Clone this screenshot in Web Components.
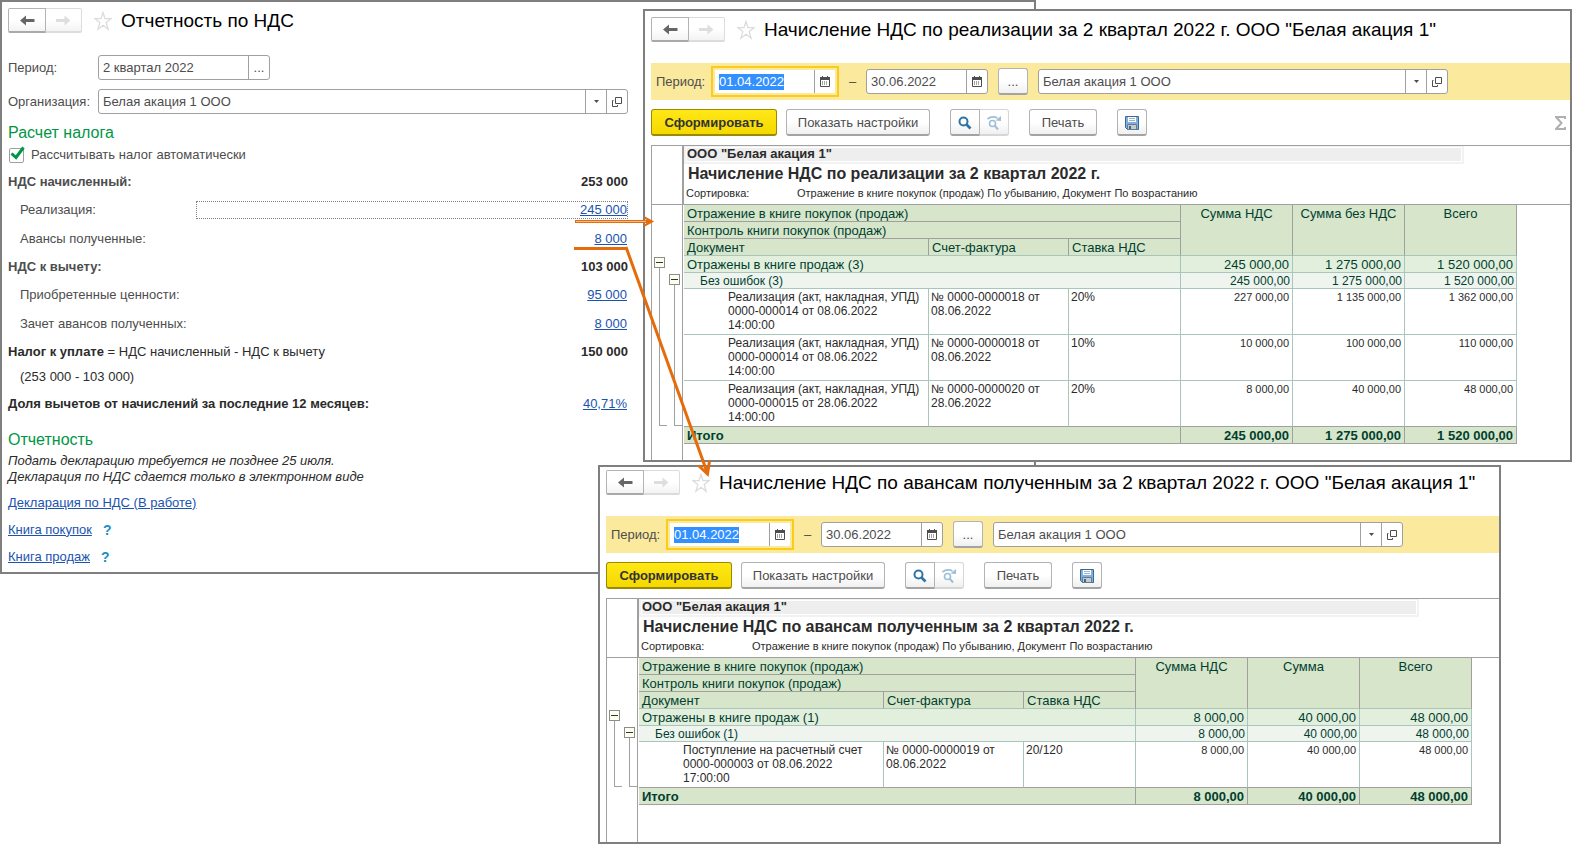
<!DOCTYPE html>
<html lang="ru">
  <head>
    <meta charset="UTF-8" />
    <meta name="viewport" content="width=device-width, initial-scale=1.0" />
    <title>Отчетность по НДС</title>
    <style>
      body {
        margin: 0;
        background: #fff;
        color: #4d4d4d;
        font: 13px/16px "Liberation Sans", Arial, sans-serif;
      }
    </style>
  </head>
  <body>
    <desk-top>
      <app-window style="left: 0; top: 0; right: 538px">
        <page-head caption="Отчетность по НДС"></page-head>
        <vat-summary></vat-summary>
      </app-window>

      <app-window style="left: 643px; top: 9px; right: 2px">
        <page-head caption='Начисление НДС по реализации за 2 квартал 2022 г. ООО "Белая акация 1"'></page-head>
        <period-bar></period-bar>
        <report-tools total></report-tools>
        <vat-report source="sales"></vat-report>
      </app-window>

      <app-window compact style="left: 598px; top: 465px; right: 73px">
        <page-head caption='Начисление НДС по авансам полученным за 2 квартал 2022 г. ООО "Белая акация 1"'></page-head>
        <period-bar></period-bar>
        <report-tools></report-tools>
        <vat-report source="advances" style="--tail: 37px"></vat-report>
      </app-window>

      <link-arrows></link-arrows>
    </desk-top>

    <template id="desk-top">
      <style>
        :host {
          display: block;
          position: relative;
          min-height: 100vh;
          overflow: hidden;
        }
      </style>
      <slot></slot>
    </template>

    <template id="app-window">
      <style>
        :host {
          display: block;
          position: absolute;
          box-sizing: border-box;
          border: 2px solid #7f7f7f;
          background: #fff;
          padding: 6px 0 0 6px;
        }
        :host([compact]) {
          padding-top: 3px;
        }
      </style>
      <slot></slot>
    </template>

    <template id="page-head">
      <style>
        :host {
          display: flex;
          align-items: center;
          height: 25px;
          padding-bottom: 21px;
        }
        .nav {
          display: flex;
        }
        button {
          box-sizing: border-box;
          width: 38px;
          height: 25px;
          padding: 0;
          border: 1px solid #b3b3b3;
          border-bottom: 2px solid #a9a9a9;
          border-radius: 2px 0 0 2px;
          background: linear-gradient(#fff 50%, #f3f3f3);
        }
        button[disabled] {
          width: 36px;
          border-color: #dcdcdc;
          border-left: 0;
          border-radius: 0 2px 2px 0;
        }
        svg {
          display: block;
          margin: 0 auto;
        }
        .star {
          flex: none;
          margin: 0 9px 0 12px;
        }
        h1 {
          margin: 0;
          font-size: 19px;
          line-height: 24px;
          font-weight: 400;
          color: #000;
          white-space: nowrap;
        }
      </style>
      <div class="nav">
        <button aria-label="Назад">
          <svg width="15" height="11"><path d="M0 5.500L6 .5V4h8.500v3H6v3.500z" fill="#666" /></svg>
        </button>
        <button aria-label="Вперед" disabled>
          <svg width="15" height="11"><path d="M14.500 5.500L8.500 .5V4H0v3h8.500v3.500z" fill="#dedede" /></svg>
        </button>
      </div>
      <svg class="star" width="18" height="20" viewBox="0 0 18 20">
        <path d="M9 1.500l2 6.200h6l-4.800 3.900 1.900 6.600L9 14.300l-5.100 3.900 1.900-6.600L1 7.700h6z" fill="none" stroke="#dcdcdc" stroke-width="1.300" />
      </svg>
      <h1></h1>
    </template>

    <template id="text-field">
      <style>
        :host {
          display: flex;
          align-items: center;
          min-width: 0;
        }
        label {
          flex: none;
          width: var(--label-width, auto);
          white-space: nowrap;
        }
        .box {
          display: flex;
          flex: 1;
          min-width: 0;
          box-sizing: border-box;
          height: 25px;
          border: 1px solid #a0a0a0;
          border-radius: 3px;
          background: #fff;
        }
        .edit {
          flex: 1;
          min-width: 0;
          display: flex;
          align-items: center;
          padding: 0 4px;
        }
        input {
          width: 100%;
          padding: 0;
          border: 0;
          outline: 0;
          background: none;
          font: inherit;
          color: #4d4d4d;
        }
        button {
          flex: none;
          width: 21px;
          padding: 0;
          border: 0;
          border-left: 1px solid #a0a0a0;
          background: none;
          font: inherit;
          color: #4d4d4d;
        }
        svg {
          display: block;
          margin: 0 auto;
        }
        :host([active]) .box {
          height: 31px;
          padding: 2px;
          border: 2px solid #fbcc1c;
          border-radius: 0;
          background: #fff content-box;
        }
        :host([active]) input {
          field-sizing: content;
          width: auto;
          background: #3390ff;
          color: #fff;
        }
      </style>
      <label for="value"></label>
      <div class="box">
        <div class="edit"><input id="value" type="text" /></div>
      </div>
    </template>

    <template id="vat-summary">
      <style>
        :host {
          display: block;
          max-width: 620px;
          padding: 1px 0 2px;
        }
        text-field {
          --label-width: 90px;
          margin-bottom: 9px;
        }
        .period {
          width: 262px;
        }
        h2 {
          margin: 0;
          font-size: 16px;
          line-height: 19px;
          font-weight: 400;
          color: #009646;
        }
        .auto {
          display: flex;
          align-items: center;
          gap: 7px;
          height: 26px;
        }
        .auto input {
          appearance: none;
          width: 15px;
          height: 15px;
          margin: 0 0 0 1px;
          border: 1px solid #a0a0a0;
          border-radius: 2px;
        }
        .tick {
          width: 16px;
          height: 18px;
          margin: -4px -1px 0 -22px;
          pointer-events: none;
        }
        .row {
          display: flex;
          align-items: center;
          justify-content: space-between;
          height: 29px;
          padding-left: 12px;
        }
        .row.head {
          height: 27px;
          padding-left: 0;
          font-weight: 700;
        }
        .row.dark {
          color: #2b2b2b;
        }
        .row span {
          font-weight: 400;
        }
        .row b {
          color: #2b2b2b;
        }
        .focus {
          box-sizing: border-box;
          width: 432px;
          height: 18px;
          border: 1px dotted #808080;
          text-align: right;
        }
        .formula {
          height: 23px;
        }
        .row.share {
          height: 31px;
        }
        a {
          color: #1a54b0;
        }
        .row > a {
          margin-right: 1px;
        }
        p {
          margin: 4px 0;
          font-style: italic;
          color: #2b2b2b;
        }
        .reports {
          margin: 11px 0 0;
        }
        .line {
          display: flex;
          align-items: center;
          gap: 11px;
          height: 27px;
        }
        .line b {
          color: #1f8dc4;
          font-size: 14px;
          font-weight: 700;
        }
      </style>
      <text-field class="period" label="Период:" value="2 квартал 2022" buttons="dots"></text-field>
      <text-field label="Организация:" value="Белая акация 1 ООО" buttons="drop open"></text-field>
      <h2>Расчет налога</h2>
      <div class="auto">
        <input id="auto" type="checkbox" checked />
        <svg class="tick" viewBox="0 0 16 18"><path d="M2.500 9.500L7 13.500 14.500 3.500" fill="none" stroke="#009646" stroke-width="3" /></svg>
        <label for="auto">Рассчитывать налог автоматически</label>
      </div>
      <div class="row head">НДС начисленный: <b>253 000</b></div>
      <div class="row">Реализация: <div class="focus"><a href="#">245 000</a></div></div>
      <div class="row">Авансы полученные: <a href="#">8 000</a></div>
      <div class="row head">НДС к вычету: <b>103 000</b></div>
      <div class="row">Приобретенные ценности: <a href="#">95 000</a></div>
      <div class="row">Зачет авансов полученных: <a href="#">8 000</a></div>
      <div class="row head dark"><div>Налог к уплате <span>= НДС начисленный - НДС к вычету</span></div><b>150 000</b></div>
      <div class="row dark formula">(253 000 - 103 000)</div>
      <div class="row head dark share">Доля вычетов от начислений за последние 12 месяцев: <a href="#"><span>40,71%</span></a></div>
      <h2 class="reports">Отчетность</h2>
      <p>Подать декларацию требуется не позднее 25 июля.<br />Декларация по НДС сдается только в электронном виде</p>
      <div class="line"><a href="#">Декларация по НДС (В работе)</a></div>
      <div class="line"><a href="#">Книга покупок</a> <b>?</b></div>
      <div class="line"><a href="#">Книга продаж</a> <b>?</b></div>
    </template>

    <template id="period-bar">
      <style>
        :host {
          display: flex;
          align-items: center;
          height: 37px;
          padding-left: 5px;
          background: #fbe99d;
        }
        .from {
          width: 183px;
          --label-width: 55px;
        }
        .dash {
          width: 27px;
          text-align: center;
        }
        .to {
          width: 122px;
        }
        tool-button {
          margin: 0 10px;
        }
        .org {
          flex: 0 1 410px;
        }
      </style>
      <text-field class="from" active label="Период:" value="01.04.2022" buttons="calendar"></text-field>
      <span class="dash">–</span>
      <text-field class="to" value="30.06.2022" hint="Конец периода" buttons="calendar"></text-field>
      <tool-button style="--width: 30px">...</tool-button>
      <text-field class="org" value="Белая акация 1 ООО" hint="Организация" buttons="drop open"></text-field>
    </template>

    <template id="tool-button">
      <style>
        :host {
          display: block;
          flex: none;
        }
        button {
          display: flex;
          align-items: center;
          justify-content: center;
          box-sizing: border-box;
          width: var(--width);
          height: 27px;
          padding: 1px 0 0;
          border: 1px solid #b3b3b3;
          border-bottom: 2px solid #a3a3a3;
          border-radius: 3px;
          background: linear-gradient(#fff 50%, #f0f0f0);
          font: inherit;
          color: #4d4d4d;
          white-space: nowrap;
        }
        :host([primary]) button {
          border-color: #9b8a00;
          background: linear-gradient(#ffe817, #f5d800);
          font-weight: 700;
          color: #333;
        }
        :host([first]) button {
          border-radius: 3px 0 0 3px;
        }
        :host([last]) button {
          border-color: #d6d6d6;
          border-left: 0;
          border-radius: 0 3px 3px 0;
        }
      </style>
      <button><slot></slot></button>
    </template>

    <template id="report-tools">
      <style>
        :host {
          display: flex;
          align-items: center;
          height: 27px;
          padding: 9px 4px 9px 0;
        }
        .settings {
          margin: 0 20px 0 9px;
        }
        .print {
          margin: 0 20px;
        }
        .sigma {
          display: none;
          margin-left: auto;
        }
        :host([total]) .sigma {
          display: block;
        }
      </style>
      <tool-button primary style="--width: 126px">Сформировать</tool-button>
      <tool-button class="settings" style="--width: 144px">Показать настройки</tool-button>
      <tool-button first style="--width: 30px">
        <svg width="14" height="14"><circle cx="5.500" cy="5.500" r="4" fill="none" stroke="#2f74a8" stroke-width="2" /><path d="M8.500 8.500l4 4" stroke="#2f74a8" stroke-width="2.600" /></svg>
      </tool-button>
      <tool-button last style="--width: 29px">
        <svg width="16" height="16"><g fill="none" stroke="#9dbfd6"><circle cx="6.500" cy="8.500" r="3" stroke-width="1.600" /><path d="M9 11l3 3.500" stroke-width="2" /><path d="M1.500 4Q6 .5 11.500 3" stroke-width="1.800" /></g><path d="M9.500 5.500l5.500.5V1z" fill="#9dbfd6" /></svg>
      </tool-button>
      <tool-button class="print" style="--width: 68px">Печать</tool-button>
      <tool-button style="--width: 30px">
        <svg width="14" height="14"><path d="M.5.5h13v13H2.500l-2-2z" fill="#80afe0" stroke="#40658f" /><path d="M3 1h8v5H3z" fill="#fff" /><path d="M4 2.500h6M4 4.500h6" stroke="#9bb4d2" /><path d="M2.500 13.500v-5h9v5z" fill="#c7cac5" stroke="#5e7d9c" /><path d="M4 10h2v3H4z" fill="#40658f" /></svg>
      </tool-button>
      <svg class="sigma" width="11" height="14"><path d="M10 3V1H1l5.500 6L1 13h9v-2" fill="none" stroke="#b0b0b0" stroke-width="2" /></svg>
    </template>

    <template id="vat-report">
      <style>
        :host {
          display: grid;
          grid-template-columns: 33px minmax(0, 1fr);
          border-top: 1px solid #a0a0a0;
          color: #2b2b2b;
        }
        .corner {
          border-left: 1px solid #a0a0a0;
          border-right: 2px solid #a0a0a0;
        }
        .corner,
        .top {
          height: 58px;
          border-bottom: 1px solid #a0a0a0;
        }
        .org {
          box-sizing: border-box;
          max-width: 780px;
          height: 18px;
          padding: 2px 3px;
          background: #f2f2f2;
        }
        .org b {
          display: block;
          box-sizing: border-box;
          height: 13px;
          background: #eee;
          outline: 1px solid #fff;
          line-height: 11px;
        }
        h3 {
          margin: 0;
          padding-left: 4px;
          font-size: 16px;
          line-height: 20px;
        }
        .sort {
          display: flex;
          padding-left: 2px;
          font-size: 11px;
          line-height: 18px;
        }
        .sort span {
          width: 111px;
        }
        .tree {
          display: flex;
          gap: 2px;
          box-sizing: border-box;
          width: 32px;
          padding: 52px 0 calc(var(--tail, 16px) + 18px) 2px;
          border: solid #a0a0a0;
          border-width: 0 1px;
        }
        .branch {
          display: flex;
          flex-direction: column;
          width: 13px;
        }
        .branch + .branch {
          padding-top: 17px;
        }
        .branch button {
          width: 11px;
          height: 11px;
          padding: 0;
          border: 1px solid #8c8c8c;
          background: #fffff0 linear-gradient(#333, #333) center / 7px 1px no-repeat;
        }
        .branch i {
          flex: 1;
          margin-left: 5px;
          border: solid #a0a0a0;
          border-width: 0 0 1px 1px;
        }
        .sheet {
          padding-bottom: var(--tail, 16px);
        }
        table {
          table-layout: fixed;
          width: 833px;
          border-collapse: separate;
          border-spacing: 0;
        }
        th,
        td {
          box-sizing: border-box;
          height: 17px;
          padding: 1px 3px 0;
          border: solid #a8c6bb;
          border-width: 0 1px 1px 0;
          line-height: 15px;
          font-weight: 400;
          text-align: left;
          vertical-align: top;
          white-space: nowrap;
        }
        th,
        .total td {
          border-color: #a0a0a0;
          background: #d7e5cb;
          color: #003f2f;
        }
        th.sum {
          text-align: center;
        }
        thead tr:last-child th,
        th.sum {
          border-bottom-color: #a8c6bb;
        }
        td.num {
          text-align: right;
        }
        .group td {
          background: #e3efdd;
          color: #003f2f;
        }
        .sub td {
          height: 16px;
          padding-right: 2px;
          background: #eff4ef;
          font-size: 12px;
          line-height: 14px;
          color: #003f2f;
        }
        .sub td:first-child {
          padding-left: 16px;
        }
        .item td {
          height: 46px;
          padding: 1px 3px 0 2px;
          font-size: 12px;
          line-height: 14px;
          white-space: pre-line;
        }
        .item td:first-child {
          padding-left: 44px;
          padding-right: 0;
        }
        .item .num {
          font-size: 11px;
        }
        .item.final td {
          border-bottom-color: #a0a0a0;
        }
        .total td {
          font-weight: 700;
        }
      </style>
      <div class="corner"></div>
      <div class="top">
        <div class="org"><b>ООО "Белая акация 1"</b></div>
        <h3></h3>
        <div class="sort"><span>Сортировка:</span>Отражение в книге покупок (продаж) По убыванию, Документ По возрастанию</div>
      </div>
      <div class="tree">
        <div class="branch"><button aria-label="Свернуть"></button><i></i></div>
        <div class="branch"><button aria-label="Свернуть"></button><i></i></div>
      </div>
      <div class="sheet">
        <table>
          <colgroup>
            <col style="width: 245px" />
            <col style="width: 140px" />
            <col span="4" style="width: 112px" />
          </colgroup>
          <thead></thead>
          <tbody></tbody>
        </table>
      </div>
    </template>

    <template id="link-arrows">
      <style>
        :host {
          position: absolute;
          left: 0;
          top: 0;
          pointer-events: none;
        }
        svg {
          display: block;
        }
      </style>
      <svg width="720" height="480" fill="none" stroke="#e46c0a">
        <path d="M575 221.500h76" stroke-width="3" />
        <path d="M576 221.500h70" stroke="#f6b98a" />
        <path d="M644.500 217.500l7.500 4-7.500 4" stroke-width="2" />
        <path d="M574 248.500h52" stroke-width="3" />
        <path d="M626 247L707 472" stroke-width="3" />
        <path d="M698.500 465.500l9 8.500 2-13" stroke-width="3" />
      </svg>
    </template>

    <script>
      const reports = {
        sales: {
          title: 'Начисление НДС по реализации за 2 квартал 2022 г.',
          sums: ['Сумма НДС', 'Сумма без НДС', 'Всего'],
          totals: ['245 000,00', '1 275 000,00', '1 520 000,00'],
          items: [
            ['Реализация (акт, накладная, УПД)\n0000-000014 от 08.06.2022\n14:00:00', '№ 0000-0000018 от\n08.06.2022', '20%', '227 000,00', '1 135 000,00', '1 362 000,00'],
            ['Реализация (акт, накладная, УПД)\n0000-000014 от 08.06.2022\n14:00:00', '№ 0000-0000018 от\n08.06.2022', '10%', '10 000,00', '100 000,00', '110 000,00'],
            ['Реализация (акт, накладная, УПД)\n0000-000015 от 28.06.2022\n14:00:00', '№ 0000-0000020 от\n28.06.2022', '20%', '8 000,00', '40 000,00', '48 000,00']
          ]
        },
        advances: {
          title: 'Начисление НДС по авансам полученным за 2 квартал 2022 г.',
          sums: ['Сумма НДС', 'Сумма', 'Всего'],
          totals: ['8 000,00', '40 000,00', '48 000,00'],
          items: [
            ['Поступление на расчетный счет\n0000-000003 от 08.06.2022\n17:00:00', '№ 0000-0000019 от\n08.06.2022', '20/120', '8 000,00', '40 000,00', '48 000,00']
          ]
        }
      }

      // кнопки внутри поля ввода
      const fieldButtons = {
        dots: '<button aria-label="Выбрать">...</button>',
        drop: '<button aria-label="Список"><svg width="5" height="3"><path d="M0 0h5L2.500 3z" fill="#4d4d4d" /></svg></button>',
        open: '<button aria-label="Открыть"><svg width="10" height="10" fill="none" stroke="#4d4d4d"><path d="M3.500.5h6v6h-6zM1.500 3.500h-1v6h5v-1.500" /></svg></button>',
        calendar: '<button aria-label="Календарь"><svg width="10" height="11"><path d="M.5 1.500h9v9h-9z" fill="#fff" stroke="#4d4d4d" /><path d="M0 1h10v3H0zM2 0h1v2H2zM7 0h1v2H7z" fill="#4d4d4d" /><path d="M2 6h6M2 8h6" stroke="#4d4d4d" stroke-dasharray="1 1" /></svg></button>'
      }

      class BaseElement extends HTMLElement {
        constructor() {
          super()
          this.attachShadow({ mode: 'open' })
          const template = document.getElementById(this.localName)
          this.shadowRoot.append(document.importNode(template.content, true))
        }
        $(selector) {
          return this.shadowRoot.querySelector(selector)
        }
      }

      class PageHead extends BaseElement {
        connectedCallback() {
          this.$('h1').textContent = this.getAttribute('caption')
        }
      }

      class TextField extends BaseElement {
        connectedCallback() {
          const label = this.getAttribute('label')
          if (label) {
            this.$('label').textContent = label
          } else {
            this.$('label').remove()
            this.$('input').setAttribute('aria-label', this.getAttribute('hint'))
          }
          this.$('input').value = this.getAttribute('value')
          const names = this.getAttribute('buttons').split(' ')
          this.$('.box').insertAdjacentHTML('beforeend', names.map((name) => fieldButtons[name]).join(''))
        }
      }

      class VatReport extends BaseElement {
        connectedCallback() {
          const { title, sums, totals, items } = reports[this.getAttribute('source')]
          const nums = (list) => list.map((n) => `<td class="num">${n}</td>`).join('')
          this.$('h3').textContent = title
          this.$('thead').innerHTML = `
            <tr>
              <th colspan="3">Отражение в книге покупок (продаж)</th>
              ${sums.map((s) => `<th class="sum" rowspan="3">${s}</th>`).join('')}
            </tr>
            <tr><th colspan="3">Контроль книги покупок (продаж)</th></tr>
            <tr><th>Документ</th><th>Счет-фактура</th><th>Ставка НДС</th></tr>`
          const rows = items.map((item, i) => {
            const text = item.slice(0, 3).map((t) => `<td>${t}</td>`).join('')
            const cls = i === items.length - 1 ? 'item final' : 'item'
            return `<tr class="${cls}">${text}${nums(item.slice(3))}</tr>`
          })
          this.$('tbody').innerHTML = `
            <tr class="group"><td colspan="3">Отражены в книге продаж (${items.length})</td>${nums(totals)}</tr>
            <tr class="sub"><td colspan="3">Без ошибок (${items.length})</td>${nums(totals)}</tr>
            ${rows.join('')}
            <tr class="total"><td colspan="3">Итого</td>${nums(totals)}</tr>`
        }
      }

      customElements.define('desk-top', class extends BaseElement {})
      customElements.define('app-window', class extends BaseElement {})
      customElements.define('page-head', PageHead)
      customElements.define('text-field', TextField)
      customElements.define('tool-button', class extends BaseElement {})
      customElements.define('vat-summary', class extends BaseElement {})
      customElements.define('period-bar', class extends BaseElement {})
      customElements.define('report-tools', class extends BaseElement {})
      customElements.define('vat-report', VatReport)
      customElements.define('link-arrows', class extends BaseElement {})
    </script>
  </body>
</html>
